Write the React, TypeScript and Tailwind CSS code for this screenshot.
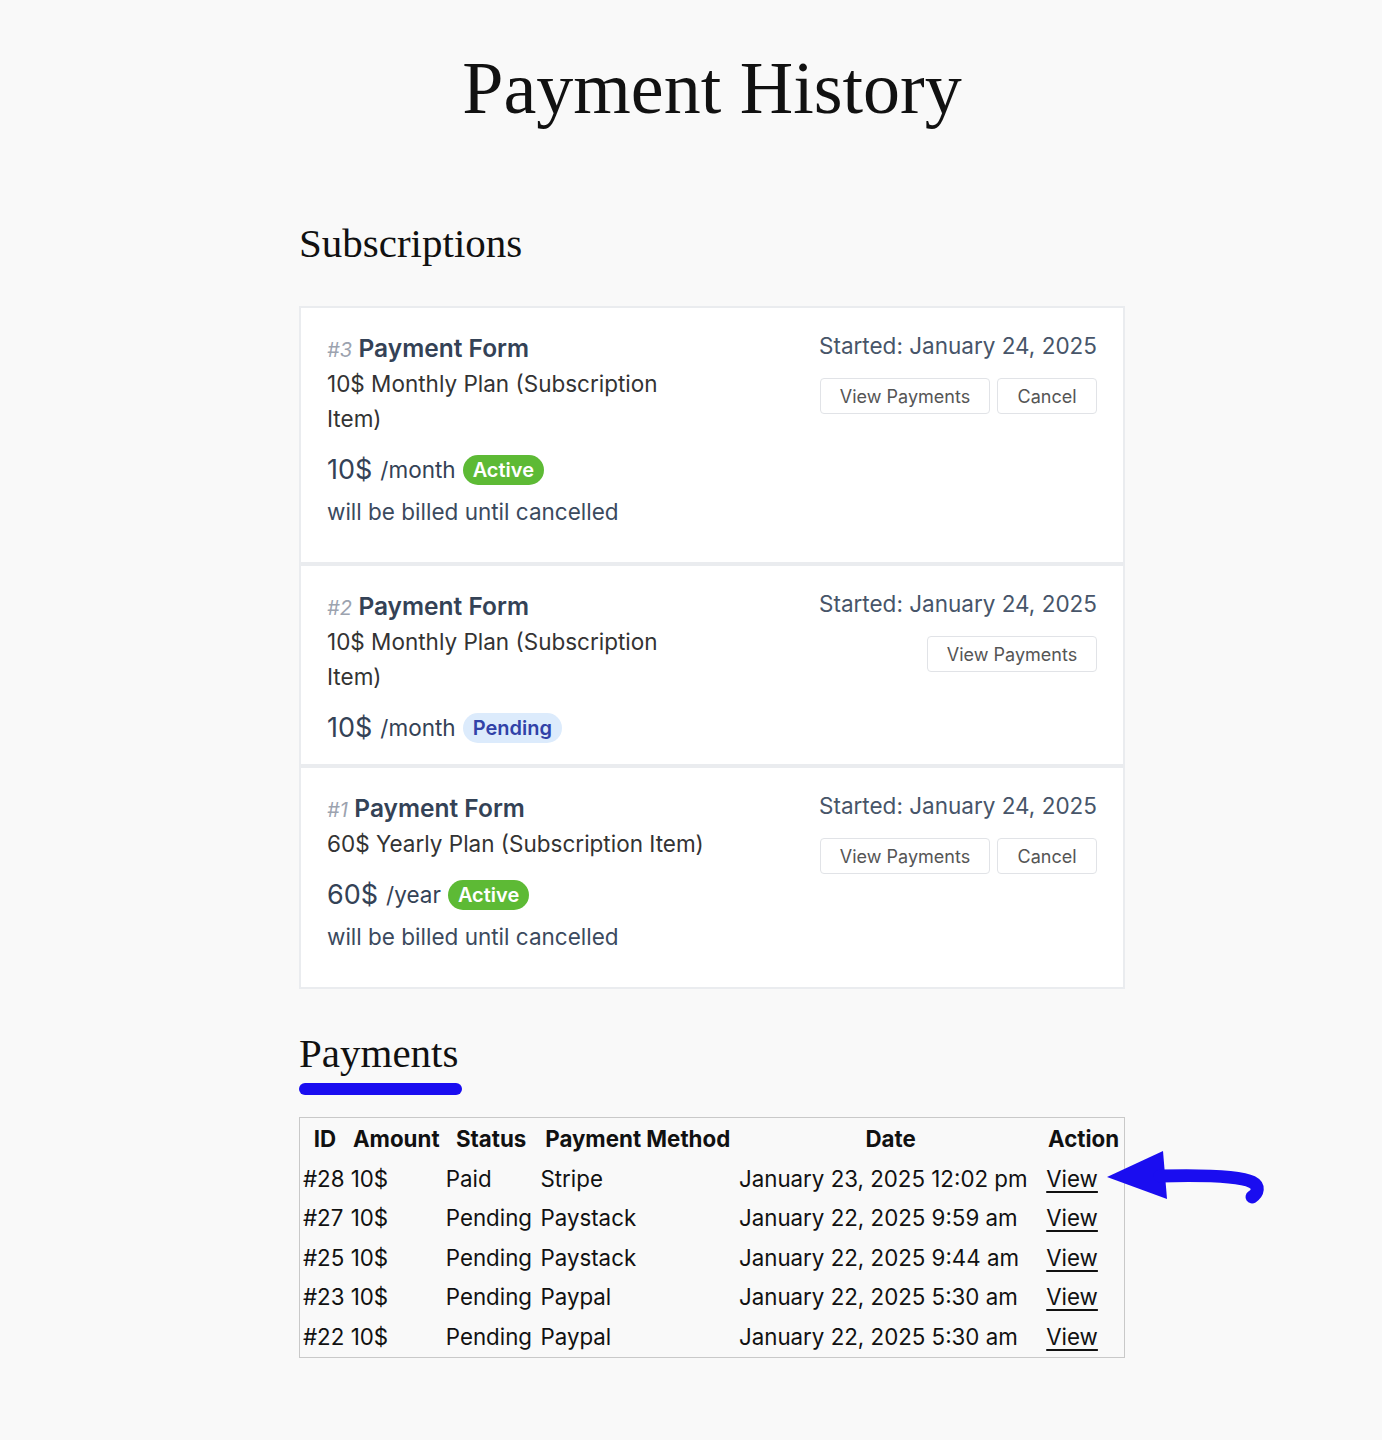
import React from "react"

type Sub = {
  id: number
  plan: string
  price: string
  period: string
  status: "Active" | "Pending"
  billed: boolean
  cancel: boolean
}

const subs: Sub[] = [
  { id: 3, plan: "10$ Monthly Plan (Subscription Item)", price: "10$", period: "/month", status: "Active", billed: true, cancel: true },
  { id: 2, plan: "10$ Monthly Plan (Subscription Item)", price: "10$", period: "/month", status: "Pending", billed: false, cancel: false },
  { id: 1, plan: "60$ Yearly Plan (Subscription Item)", price: "60$", period: "/year", status: "Active", billed: true, cancel: true },
]

const payments = [
  { id: "#28", amount: "10$", status: "Paid", method: "Stripe", date: "January 23, 2025 12:02 pm" },
  { id: "#27", amount: "10$", status: "Pending", method: "Paystack", date: "January 22, 2025 9:59 am" },
  { id: "#25", amount: "10$", status: "Pending", method: "Paystack", date: "January 22, 2025 9:44 am" },
  { id: "#23", amount: "10$", status: "Pending", method: "Paypal", date: "January 22, 2025 5:30 am" },
  { id: "#22", amount: "10$", status: "Pending", method: "Paypal", date: "January 22, 2025 5:30 am" },
]

const serif = "font-['Liberation_Serif',serif]"

function SubCard({ sub }: { sub: Sub }) {
  return (
    <div className="flex justify-between border-2 border-[#eaecef] bg-white px-[26px] pt-[25px] pb-[18px]">
      {/* left column */}
      <div className="w-[382px]">
        <div className="leading-[30px]">
          <span className="mr-[2px] text-[20px] italic text-[#9ca3af]">#{sub.id}</span>{" "}
          <span className="text-[24.5px] font-semibold text-[#344256]">Payment Form</span>
        </div>
        <div className="text-[22.5px] leading-[35px] text-[#333]">{sub.plan}</div>
        <div className="mt-[16px] flex items-center leading-[36px] text-[#344256]">
          <span className="text-[27px]">{sub.price}</span>
          <span className="ml-[8px] text-[22.5px]">{sub.period}</span>
          {sub.status === "Active" ? (
            <span className="ml-[7px] rounded-full bg-[#5dba35] px-[10px] text-[20px] font-semibold leading-[30px] text-white">
              Active
            </span>
          ) : (
            <span className="ml-[7px] rounded-full bg-[#dcebfc] px-[10px] text-[20px] font-semibold leading-[30px] text-[#3142a8]">
              Pending
            </span>
          )}
        </div>
        {sub.billed && (
          <div className="mt-[6px] mb-[14px] text-[22.5px] leading-[36px] text-[#3b4a5e]">
            will be billed until cancelled
          </div>
        )}
      </div>

      {/* right column */}
      <div className="flex flex-col items-end">
        <div className="-mt-[2px] text-[22.5px] leading-[30px] text-[#475569]">Started: January 24, 2025</div>
        <div className="mt-[17px] flex gap-[7px]">
          <button className="h-[36px] w-[170px] rounded-[4px] border border-[#e1e3e7] bg-white text-[18px] text-[#555]">
            View Payments
          </button>
          {sub.cancel && (
            <button className="h-[36px] w-[100px] rounded-[4px] border border-[#e1e3e7] bg-white text-[18px] text-[#555]">
              Cancel
            </button>
          )}
        </div>
      </div>
    </div>
  )
}

export default function App() {
  return (
    <div className="min-h-[1440px] bg-[#f9f9f9] font-['Inter',sans-serif]">
      <div className="ml-[299px] w-[826px] pt-[38px]">
        <h1 className={`${serif} text-center text-[74px] leading-[100px] text-[#111]`}>Payment History</h1>

        <h2 className={`${serif} mt-[80px] text-[41px] leading-[50px] text-[#111]`}>Subscriptions</h2>

        <div className="mt-[38px] flex flex-col">
          {subs.map((s) => (
            <SubCard key={s.id} sub={s} />
          ))}
        </div>

        <h2 className={`${serif} mt-[39px] text-[41px] leading-[50px] text-[#111]`}>Payments</h2>
        <div className="mt-[5px] h-[12px] w-[163px] rounded-full bg-[#1a0df0]" />

        <div className="relative mt-[22px]">
          <div className="border border-[#c9c9c9]">
            <table className="w-full border-separate border-spacing-[2px] text-[22.3px] leading-[35.5px] text-[#111]">
              <thead>
                <tr>
                  {["ID", "Amount", "Status", "Payment Method", "Date", "Action"].map((h) => (
                    <th key={h} className="p-px text-center font-bold">
                      {h}
                    </th>
                  ))}
                </tr>
              </thead>
              <tbody>
                {payments.map((p) => (
                  <tr key={p.id}>
                    <td className="p-px">{p.id}</td>
                    <td className="p-px">{p.amount}</td>
                    <td className="p-px">{p.status}</td>
                    <td className="p-px">{p.method}</td>
                    <td className="p-px">{p.date}</td>
                    <td className="p-px">
                      <a href="#" className="underline underline-offset-[4px]">
                        View
                      </a>
                    </td>
                  </tr>
                ))}
              </tbody>
            </table>
          </div>

          {/* annotation arrow */}
          <svg
            className="absolute left-[801px] top-[23px]"
            width="170"
            height="75"
            viewBox="0 0 170 75"
          >
            <polygon points="7,37 63,11 67,59" fill="#1a0df0" />
            <path
              d="M60 36 C 100 35, 140 36, 152 42 C 160 46, 158 53, 152 57"
              fill="none"
              stroke="#1a0df0"
              strokeWidth="13"
              strokeLinecap="round"
            />
          </svg>
        </div>
      </div>
    </div>
  )
}
